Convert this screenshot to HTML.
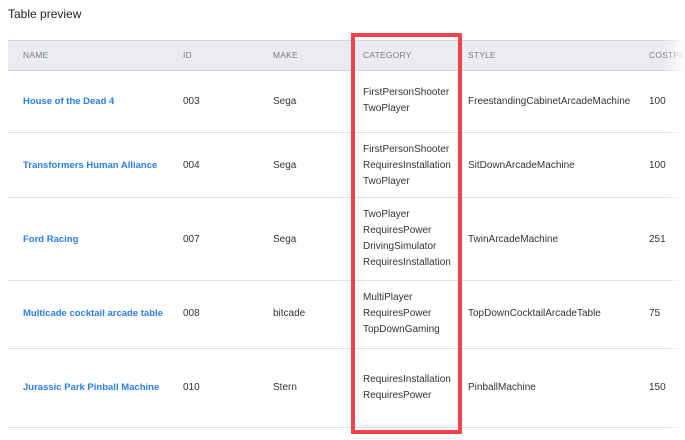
<!DOCTYPE html><html><head><style>
body{margin:0;width:685px;height:440px;background:#fff;font-family:"Liberation Sans",sans-serif;position:relative;overflow:hidden;color:#333}
.t{position:absolute;font-size:10px;white-space:nowrap;line-height:16px}
.h{position:absolute;font-size:8.5px;color:#7a7d85;letter-spacing:.2px}
.n{color:#2b7de9;font-weight:bold;font-size:9.5px}
.l{position:absolute;left:8px;right:0;height:1px;background:#dfe1e6}
</style></head><body>
<div style="position:absolute;left:8px;top:7px;font-size:12px;color:#222">Table preview</div>
<div style="position:absolute;left:8px;right:0;top:40px;height:29px;background:#ebecf1;border-top:1px solid #d5d7de;border-bottom:1px solid #d5d7de"></div>
<div class="h" style="left:23px;top:50px">NAME</div>
<div class="h" style="left:183px;top:50px">ID</div>
<div class="h" style="left:273px;top:50px">MAKE</div>
<div class="h" style="left:363px;top:50px">CATEGORY</div>
<div class="h" style="left:468px;top:50px">STYLE</div>
<div class="h" style="left:649px;top:50px">COSTPER</div>
<div class="l" style="top:132px"></div><div class="l" style="top:197px"></div><div class="l" style="top:280px"></div><div class="l" style="top:348px"></div><div class="l" style="top:427px"></div>

<div class="t n" style="left:23px;top:94px">House of the Dead 4</div>
<div class="t" style="left:183px;top:94px">003</div><div class="t" style="left:273px;top:94px">Sega</div>
<div class="t" style="left:363px;top:85px">FirstPersonShooter<br>TwoPlayer</div>
<div class="t" style="left:468px;top:94px">FreestandingCabinetArcadeMachine</div><div class="t" style="left:649px;top:94px">100</div>

<div class="t n" style="left:23px;top:158px">Transformers Human Alliance</div>
<div class="t" style="left:183px;top:158px">004</div><div class="t" style="left:273px;top:158px">Sega</div>
<div class="t" style="left:363px;top:142px">FirstPersonShooter<br>RequiresInstallation<br>TwoPlayer</div>
<div class="t" style="left:468px;top:158px">SitDownArcadeMachine</div><div class="t" style="left:649px;top:158px">100</div>

<div class="t n" style="left:23px;top:232px">Ford Racing</div>
<div class="t" style="left:183px;top:232px">007</div><div class="t" style="left:273px;top:232px">Sega</div>
<div class="t" style="left:363px;top:207px">TwoPlayer<br>RequiresPower<br>DrivingSimulator<br>RequiresInstallation</div>
<div class="t" style="left:468px;top:232px">TwinArcadeMachine</div><div class="t" style="left:649px;top:232px">251</div>

<div class="t n" style="left:23px;top:306px">Multicade cocktail arcade table</div>
<div class="t" style="left:183px;top:306px">008</div><div class="t" style="left:273px;top:306px">bitcade</div>
<div class="t" style="left:363px;top:290px">MultiPlayer<br>RequiresPower<br>TopDownGaming</div>
<div class="t" style="left:468px;top:306px">TopDownCocktailArcadeTable</div><div class="t" style="left:649px;top:306px">75</div>

<div class="t n" style="left:23px;top:380px">Jurassic Park Pinball Machine</div>
<div class="t" style="left:183px;top:380px">010</div><div class="t" style="left:273px;top:380px">Stern</div>
<div class="t" style="left:363px;top:372px">RequiresInstallation<br>RequiresPower</div>
<div class="t" style="left:468px;top:380px">PinballMachine</div><div class="t" style="left:649px;top:380px">150</div>

<div style="position:absolute;left:665px;top:30px;width:20px;height:410px;background:linear-gradient(to right,rgba(255,255,255,0),#fff)"></div>
<div style="position:absolute;left:351px;top:33px;width:103px;height:393px;border:4px solid #f0434a"></div>
</body></html>
